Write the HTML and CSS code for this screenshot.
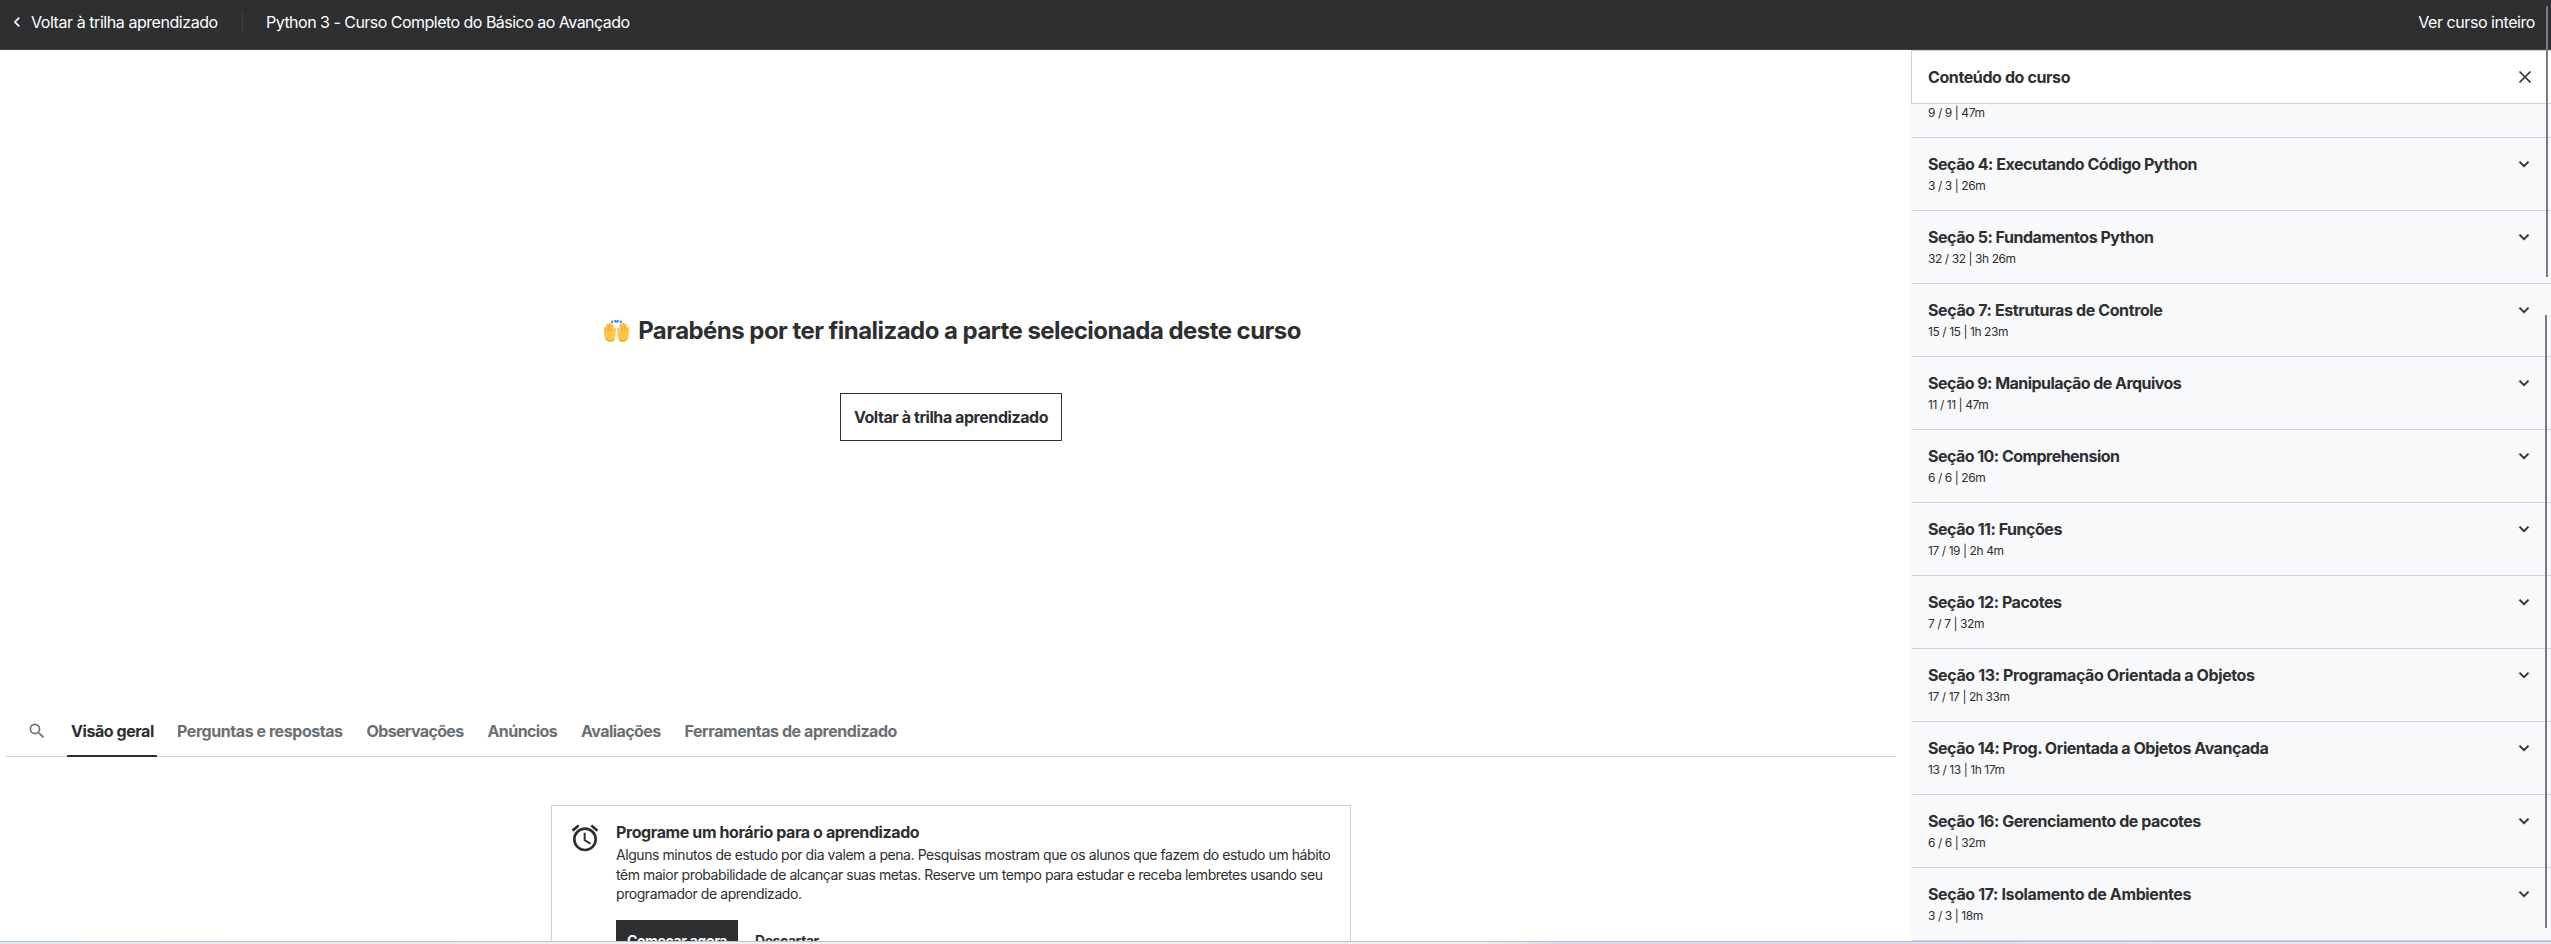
FILE: index.html
```html
<!DOCTYPE html>
<html lang="pt-BR">
<head>
<meta charset="utf-8">
<title>Python 3 - Curso Completo do Básico ao Avançado</title>
<link rel="stylesheet" href="styles.css">
</head>
<body>
<svg width="0" height="0" class="defs"><symbol id="down" viewBox="0 0 24 24"><path d="M7.41 8.59 12 13.17l4.59-4.58L18 10l-6 6-6-6z"/></symbol></svg>
<div class="app">
  <header class="topbar">
    <svg class="back" viewBox="0 0 24 24"><path d="M15.41 7.41 14 6l-6 6 6 6 1.41-1.41L10.83 12z"/></svg>
    <a class="back-link">Voltar à trilha aprendizado</a>
    <span class="divider"></span>
    <span class="course">Python 3 - Curso Completo do Básico ao Avançado</span>
    <a class="full">Ver curso inteiro</a>
  </header>
  <div class="body">
    <main class="main">
      <section class="stage">
        <h1><svg class="hands" viewBox="0 0 27 24"><g fill="#ffc64b"><path d="M1 14c-.5-3 0-6 1-6.500.8-.3 1.200.3 1.200.3s-.1-3 .9-3.300c1-.3 1.500.7 1.500.7s.2-2 1.300-1.900c1 .1 1.200 1.500 1.200 1.500s.6-1 1.500-.5c.9.5.9 2 .9 3.500l.1 3c.5-1.500 1.600-2.500 2.200-2 .8.6-.2 3-.4 5.500C12.200 18 12 23 7 23c-4 0-5.500-4-6-9z"/><path d="M1 14c-.5-3 0-6 1-6.500.8-.3 1.200.3 1.200.3s-.1-3 .9-3.300c1-.3 1.500.7 1.500.7s.2-2 1.300-1.900c1 .1 1.200 1.500 1.200 1.500s.6-1 1.500-.5c.9.5.9 2 .9 3.500l.1 3c.5-1.500 1.600-2.500 2.200-2 .8.6-.2 3-.4 5.500C12.200 18 12 23 7 23c-4 0-5.500-4-6-9z" transform="matrix(-1 0 0 1 27 0)"/></g><path d="M3.200 8.500v4M5.700 6v6M8.200 6v6M23.800 8.500v4M21.300 6v6M18.800 6v6" stroke="#eda12c" stroke-width=".8"/><path d="M3 19c2 4 7 4 8 1M24 19c-2 4-7 4-8 1" fill="none" stroke="#f2a72c" stroke-width="1.200"/><path d="M8.500 3.500 10 2M12 1l.8 2.500M15 1l-.8 2.500M17 2l1.500 1.500" fill="none" stroke="#2f88df" stroke-width="2"/></svg><span>Parabéns por ter finalizado a parte selecionada deste curso</span></h1>
        <button class="return">Voltar à trilha aprendizado</button>
      </section>
      <nav class="tabs">
        <svg class="search" viewBox="0 0 24 24"><path d="M15.500 14h-.79l-.28-.27A6.470 6.470 0 0 0 16 9.500 6.500 6.500 0 1 0 9.500 16c1.610 0 3.090-.59 4.230-1.570l.27.28v.79l5 4.990L20.490 19zm-6 0a4.500 4.500 0 1 1 0-9 4.500 4.500 0 0 1 0 9z"/></svg>
        <a class="tab active">Visão geral</a>
        <a class="tab questions">Perguntas e respostas</a>
        <a class="tab notes">Observações</a>
        <a class="tab news">Anúncios</a>
        <a class="tab reviews">Avaliações</a>
        <a class="tab tools">Ferramentas de aprendizado</a>
      </nav>
      <section class="card">
        <svg class="alarm" viewBox="0 0 24 24"><path d="m22 5.720-4.600-3.860-1.290 1.530 4.600 3.860zM7.880 3.390 6.600 1.860 2 5.710l1.290 1.530zM12.500 8H11v6l4.750 2.850.75-1.230-4-2.370zM12 4a9 9 0 1 0 0 18 9 9 0 0 0 0-18zm0 16a7 7 0 1 1 0-14 7 7 0 0 1 0 14z"/></svg>
        <div class="card-text">
          <h2>Programe um horário para o aprendizado</h2>
          <p>Alguns minutos de estudo por dia valem a pena. Pesquisas mostram que os alunos que fazem do estudo um hábito<br>têm maior probabilidade de alcançar suas metas. Reserve um tempo para estudar e receba lembretes usando seu<br>programador de aprendizado.</p>
          <div class="actions"><button class="start">Começar agora</button><button class="dismiss">Descartar</button></div>
        </div>
      </section>
    </main>
    <aside class="side">
      <div class="side-head"><h2>Conteúdo do curso</h2><svg class="close" viewBox="0 0 14 14"><path d="m1.500 1.500 11 11m0-11-11 11"/></svg></div>
      <div class="partial"><small>9 / 9 | 47m</small></div>
      <div class="item"><h3>Seção 4: Executando Código Python</h3><small>3 / 3 | 26m</small><svg><use href="#down"/></svg></div>
      <div class="item"><h3>Seção 5: Fundamentos Python</h3><small>32 / 32 | 3h 26m</small><svg><use href="#down"/></svg></div>
      <div class="item"><h3 class="loose">Seção 7: Estruturas de Controle</h3><small>15 / 15 | 1h 23m</small><svg><use href="#down"/></svg></div>
      <div class="item"><h3 class="tight">Seção 9: Manipulação de Arquivos</h3><small>11 / 11 | 47m</small><svg><use href="#down"/></svg></div>
      <div class="item"><h3 class="tight">Seção 10: Comprehension</h3><small>6 / 6 | 26m</small><svg><use href="#down"/></svg></div>
      <div class="item"><h3>Seção 11: Funções</h3><small>17 / 19 | 2h 4m</small><svg><use href="#down"/></svg></div>
      <div class="item"><h3>Seção 12: Pacotes</h3><small>7 / 7 | 32m</small><svg><use href="#down"/></svg></div>
      <div class="item"><h3 class="loose">Seção 13: Programação Orientada a Objetos</h3><small>17 / 17 | 2h 33m</small><svg><use href="#down"/></svg></div>
      <div class="item"><h3>Seção 14: Prog. Orientada a Objetos Avançada</h3><small>13 / 13 | 1h 17m</small><svg><use href="#down"/></svg></div>
      <div class="item"><h3>Seção 16: Gerenciamento de pacotes</h3><small>6 / 6 | 32m</small><svg><use href="#down"/></svg></div>
      <div class="item"><h3 class="loose">Seção 17: Isolamento de Ambientes</h3><small>3 / 3 | 18m</small><svg><use href="#down"/></svg></div>
    </aside>
  </div>
  <footer class="edge"></footer>
  <i class="scroll page-scroll"></i><i class="scroll side-scroll"></i>
</div>
</body>
</html>
```
FILE: styles.css
```css
* { box-sizing: border-box; }
body { margin: 0; font-family: Inter, "Liberation Sans", sans-serif; color: #2d2f31; font-size: 16px; letter-spacing: -.44px; background: #fff; }
h1, h2, h3, p { margin: 0; }
button { font: inherit; letter-spacing: inherit; padding: 0; border: 0; background: none; color: inherit; }
span, h3, small, p, a, button { white-space: nowrap; }
.defs { position: absolute; }
.app { position: relative; width: 2551px; height: 944px; overflow: hidden; display: flex; flex-direction: column; }
.topbar { height: 50px; flex: none; background: #2d2f31; border-bottom: 1px solid #3e4143; color: #fff; display: flex; align-items: flex-start; padding: 10px 16px 0 7px; line-height: 24px; }
.back { width: 20px; height: 20px; fill: #fff; margin-top: 2px; }
.back-link { margin-left: 4px; width: 187px; }
.divider { width: 1px; height: 22px; background: #3e4143; margin: 1px 23px 0 24px; }
.course { letter-spacing: -.52px; }
.full { margin-left: auto; }
.body { display: flex; height: 891px; flex: none; overflow: hidden; }
.main { width: 1911px; flex: none; padding-left: 6px; }
.stage { height: 658px; padding-top: 263px; display: flex; flex-direction: column; align-items: center; margin-left: -6px; padding-right: 7px; }
h1 { font-size: 24px; line-height: 36px; letter-spacing: -.54px; display: flex; align-items: center; gap: 8px; }
.hands { width: 27px; height: 24px; }
.return { border: 1px solid #2d2f31; width: 222px; height: 48px; margin: 44px 2px 0 0; font-weight: 700; }
.tabs { height: 49px; margin-right: 15px; border-bottom: 1px solid #d1d2e0; display: flex; font-weight: 700; color: #6a6f73; }
.search { width: 20px; height: 20px; margin: 13px 20px 0 21px; fill: #6a6f73; flex: none; }
.tab { line-height: 46px; height: 49px; }
.active { color: #2d2f31; border-bottom: 2px solid #2d2f31; padding: 0 4px; width: 90px; margin-right: 20px; }
.questions { width: 189.500px; }
.notes { width: 121px; letter-spacing: -.64px; }
.news { width: 93.500px; letter-spacing: -.58px; }
.reviews { width: 103.500px; letter-spacing: -.57px; }
.card { width: 800px; height: 190px; margin: 48px 0 0 545px; border: 1px solid #d1d2e0; display: flex; padding: 15px 17px; }
.alarm { width: 32px; height: 32px; flex: none; fill: #2d2f31; margin: 1px 15px 0 0; }
.card h2, .side h2 { font-size: 16px; line-height: 24px; letter-spacing: -.4px; }
.card h2 { margin: -1px 0 1px; }
.card p { font-size: 14px; line-height: 19.600px; letter-spacing: -.43px; }
.actions { display: flex; margin-top: 16px; font-weight: 700; font-size: 14px; gap: 17px; }
.actions button { height: 40px; padding-top: 2px; }
.start { width: 122px; background: #2d2f31; color: #fff; letter-spacing: -.35px; }
.side { flex: 1; background: #f8f9fb; }
.side-head { height: 54px; border: 1px solid #d1d2e0; border-right: 0; background: #fff; display: flex; justify-content: space-between; align-items: center; padding: 0 19px 0 16px; }
.close { width: 14px; height: 14px; fill: none; stroke: #2d2f31; stroke-width: 1.700; }
.partial { height: 34px; padding: 0 16px; margin-left: 1px; border-bottom: 1px solid #d1d2e0; }
small { font-size: 12px; line-height: 17px; display: block; letter-spacing: -.42px; }
.item { height: 73px; margin-left: 1px; border-bottom: 1px solid #d1d2e0; padding: 14px 16px; position: relative; }
.item h3 { font-size: 16px; line-height: 24px; letter-spacing: -.47px; }
.item .loose { letter-spacing: -.38px; }
.item .tight { letter-spacing: -.54px; }
.item small { margin-top: 1px; }
.item svg { position: absolute; right: 17px; top: 16px; width: 20px; height: 20px; fill: #2d2f31; stroke: #2d2f31; stroke-width: .5; }
.edge { height: 3px; background: linear-gradient(90deg, #dce9f6, #f0f0f0 25%, #f0f0f0 58%, #d3dcf0 61%, #d6dcee 75%, #deebf5 88%); border-top: 1px solid #bec3c9; }
.scroll { position: absolute; width: 2px; background: #7c7984; }
.page-scroll { left: 2546px; top: 6px; height: 271px; }
.side-scroll { left: 2545px; top: 315px; height: 613px; }
```
